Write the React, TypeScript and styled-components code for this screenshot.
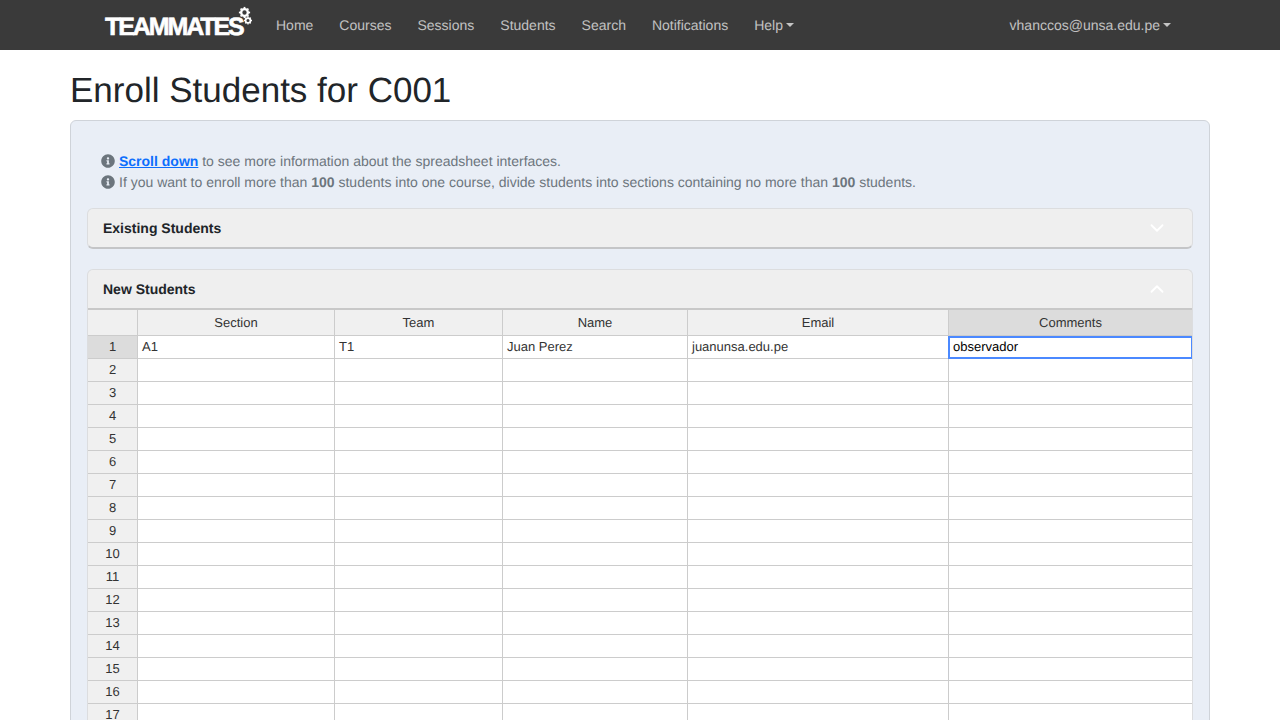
import React from "react";
import styled, { createGlobalStyle } from "styled-components";
import { ChevronDown, ChevronUp } from "lucide-react";
import { FaInfoCircle } from "react-icons/fa";

const GlobalStyle = createGlobalStyle`
  html, body {
    margin: 0;
    height: 720px;
    overflow: hidden;
    background: #fff;
    font-family: "Liberation Sans", Arial, sans-serif;
    color: #212529;
    text-rendering: geometricPrecision;
  }
`;

const NavBar = styled.nav`
  height: 50px;
  background: #3a3a3a;
  display: flex;
  align-items: center;
  padding: 0 109px 0 105px;
`;

const Brand = styled.div`
  position: relative;
  width: 158px;
  height: 50px;
  flex: none;
`;

const BrandText = styled.span`
  position: absolute;
  left: 0;
  top: 12px;
  font-size: 25px;
  line-height: 30px;
  font-weight: 700;
  letter-spacing: -2.1px;
  color: #fff;
  -webkit-text-stroke: 0.6px #fff;
`;

const Gears = styled.svg`
  position: absolute;
  left: 131px;
  top: 6px;
`;

const NavLinks = styled.div`
  display: flex;
  flex: 1;
  margin-left: 13px;
  gap: 26px;
`;

const NavLink = styled.span`
  font-size: 14px;
  line-height: 20px;
  color: rgba(255, 255, 255, 0.7);
  display: inline-flex;
  align-items: center;
`;

const Caret = styled.i`
  display: inline-block;
  margin-left: 3px;
  margin-top: -1px;
  border-top: 4px solid rgba(255, 255, 255, 0.7);
  border-left: 4px solid transparent;
  border-right: 4px solid transparent;
`;

const Container = styled.main`
  width: 1140px;
  margin: 0 auto;
`;

const Title = styled.h1`
  margin: 0;
  padding-top: 19px;
  height: 51px;
  font-size: 35px;
  line-height: 43px;
  font-weight: 400;
  color: #212529;
`;

const Panel = styled.section`
  border: 1px solid #cfd3d9;
  border-radius: 6px;
  background: #e9eef6;
  padding: 29px 16px 0;
`;

const Notes = styled.div`
  padding: 0 14px;
  margin-bottom: 16px;
`;

const Note = styled.p`
  margin: 0;
  height: 21px;
  display: flex;
  align-items: center;
  gap: 4px;
  font-size: 14px;
  color: #6c757d;
  white-space: pre;

  b {
    font-weight: 700;
  }

  a {
    color: #0d6efd;
    font-weight: 700;
    text-decoration: underline;
  }
`;

const Card = styled.div`
  border-radius: 6px;
  background: #efefef;
  border: 1px solid #dcdddf;
  border-bottom-color: #c4c5c7;
  border-bottom-width: 2px;
  margin-bottom: 20px;
  overflow: hidden;
`;

const CardHeader = styled.div`
  height: 38px;
  padding: 0 24px 0 15px;
  display: flex;
  align-items: center;
  justify-content: space-between;
  font-size: 14px;
  font-weight: 700;
  color: #212529;
`;

const Sheet = styled.div`
  display: grid;
  grid-template-columns: 51px 197px 168px 185px 261px 244px;
  grid-template-rows: 26px;
  grid-auto-rows: 23px;
  margin-left: -1px;
  border-top: 2px solid #c8c8c8;
  background: #fff;
`;

const Cell = styled.div<{ $center?: boolean; $head?: boolean; $active?: boolean }>`
  box-sizing: border-box;
  border-right: 1px solid #cccccc;
  border-bottom: 1px solid #cccccc;
  font-size: 13px;
  line-height: ${(p) => (p.$head ? "25px" : "22px")};
  padding: 0 4px;
  color: #333;
  background: ${(p) => (p.$active ? "#dcdcdc" : p.$head ? "#f0f0f0" : "#fff")};
  text-align: ${(p) => (p.$center ? "center" : "left")};
  white-space: nowrap;
`;

const RowHead = styled(Cell)`
  border-left: 1px solid #cccccc;
  line-height: 22px;
`;

const SelectedCell = styled(Cell)`
  color: #000;
  margin-left: -1px;
  padding-left: 5px;
  outline: 2px solid #4b89ff;
  outline-offset: -2px;
`;

const columns = ["Section", "Team", "Name", "Email", "Comments"];
const firstRow = ["A1", "T1", "Juan Perez", "juanunsa.edu.pe"];

const GearIcon: React.FC<{ cx: number; cy: number; r: number }> = ({ cx, cy, r }) => (
  <g transform={`translate(${cx} ${cy})`} stroke="#fff" fill="none">
    <circle r={r * 0.6} strokeWidth={r * 0.42} />
    {[0, 45, 90, 135].map((a) => (
      <g key={a} transform={`rotate(${a})`} strokeWidth={r * 0.32}>
        <line x1={0} y1={r * 0.7} x2={0} y2={r} />
        <line x1={0} y1={-r * 0.7} x2={0} y2={-r} />
      </g>
    ))}
  </g>
);

const App: React.FC = () => {
  const rows = Array.from({ length: 18 }, (_, i) => i + 1);

  return (
    <>
      <GlobalStyle />
      <NavBar>
        <Brand>
          <BrandText>TEAMMATES</BrandText>
          <Gears width="24" height="24" viewBox="0 0 24 24">
            <GearIcon cx={8.5} cy={6.5} r={5.6} />
            <GearIcon cx={12} cy={14.5} r={4} />
          </Gears>
        </Brand>
        <NavLinks>
          <NavLink>Home</NavLink>
          <NavLink>Courses</NavLink>
          <NavLink>Sessions</NavLink>
          <NavLink>Students</NavLink>
          <NavLink>Search</NavLink>
          <NavLink>Notifications</NavLink>
          <NavLink>
            Help
            <Caret />
          </NavLink>
        </NavLinks>
        <NavLink>
          vhanccos@unsa.edu.pe
          <Caret />
        </NavLink>
      </NavBar>
      <Container>
        <Title>Enroll Students for C001</Title>
        <Panel>
          <Notes>
            <Note>
              <FaInfoCircle size={14} color="#6c757d" />
              <span>
                <a>Scroll down</a> to see more information about the spreadsheet interfaces.
              </span>
            </Note>
            <Note>
              <FaInfoCircle size={14} color="#6c757d" />
              <span>
                If you want to enroll more than <b>100</b> students into one course, divide students into
                sections containing no more than <b>100</b> students.
              </span>
            </Note>
          </Notes>
          <Card>
            <CardHeader>
              Existing Students
              <ChevronDown size={22} color="#fff" strokeWidth={2} />
            </CardHeader>
          </Card>
          <Card>
            <CardHeader>
              New Students
              <ChevronUp size={22} color="#fff" strokeWidth={2} />
            </CardHeader>
            <Sheet>
              <RowHead $head $center />
              {columns.map((c) => (
                <Cell key={c} $head $center $active={c === "Comments"}>
                  {c}
                </Cell>
              ))}
              {rows.map((r) => (
                <React.Fragment key={r}>
                  <RowHead $head $center $active={r === 1}>
                    {r}
                  </RowHead>
                  {columns.map((c, i) =>
                    r === 1 && i === 4 ? (
                      <SelectedCell key={c}>observador</SelectedCell>
                    ) : (
                      <Cell key={c}>{r === 1 ? firstRow[i] : ""}</Cell>
                    ),
                  )}
                </React.Fragment>
              ))}
            </Sheet>
          </Card>
        </Panel>
      </Container>
    </>
  );
};

export default App;
